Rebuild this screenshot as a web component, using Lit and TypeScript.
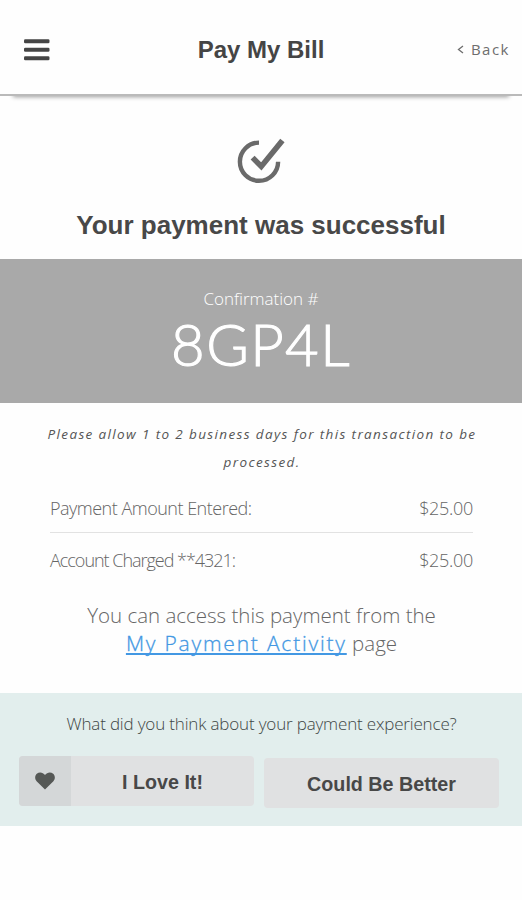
import { LitElement, html, css } from "lit";
import { customElement } from "lit/decorators.js";

const charges = [
  { label: "Payment Amount Entered:", amount: "$25.00", tight: false },
  { label: "Account Charged **4321:", amount: "$25.00", tight: true },
];

@customElement("app-root")
class AppRoot extends LitElement {
  static styles = css`
    :host {
      display: block;
      width: 522px;
      height: 900px;
      overflow: hidden;
      background: #fefefe;
      color: #656565;
      font-family: "Open Sans", "Noto Sans", sans-serif;
      font-weight: 300;
    }
    * { box-sizing: border-box; }
    svg { display: block; }
    .shell { isolation: isolate; }
    header {
      display: grid;
      grid-template-columns: 1fr auto 1fr;
      align-items: center;
      height: 96px;
      padding: 6px 12px 0 24px;
      border-bottom: 2px solid #bababa;
      background: #fefefe;
      position: relative;
    }
    header::after {
      content: "";
      position: absolute;
      z-index: -1;
      left: 14px;
      right: 14px;
      bottom: -1px;
      height: 6px;
      box-shadow: 0 1px 4px 1px rgba(0, 0, 0, 0.38);
    }
    .heading {
      margin: 0;
      padding-right: 12px;
      color: #454545;
      font: bold 24px/28px "Liberation Sans", Arial, sans-serif;
    }
    .back {
      justify-self: end;
      display: flex;
      align-items: center;
      gap: 7px;
      font-size: 15px;
      line-height: 20px;
      font-weight: 400;
      letter-spacing: 1.5px;
      padding-bottom: 2px;
      color: #6e6e6e;
    }
    .hero {
      height: 163px;
      padding-top: 41px;
      display: flex;
      flex-direction: column;
      align-items: center;
    }
    .success {
      margin: 25px 0 0;
      color: #484848;
      font: bold 26px/30px "Liberation Sans", Arial, sans-serif;
      white-space: nowrap;
    }
    .confirmation {
      height: 144px;
      padding-top: 28px;
      background: #a9a9a9;
      color: #fff;
      text-align: center;
    }
    .confirmation-label { font-size: 17px; line-height: 24px; }
    .code {
      margin-top: 3px;
      font: 300 58px/60px Lato, sans-serif;
      letter-spacing: 1.4px;
      -webkit-text-stroke: 1.1px #fff;
    }
    .note {
      margin: 0;
      padding: 18px 39px 0 41px;
      font-size: 13.5px;
      font-style: italic;
      font-weight: 400;
      line-height: 27.5px;
      letter-spacing: 1.37px;
      text-align: center;
      color: #555;
    }
    .charges { margin: 5px 49px 0 50px; }
    .charge {
      display: flex;
      justify-content: space-between;
      align-items: center;
      height: 52px;
      padding-top: 2px;
      border-bottom: 1px solid #e2e2e2;
      font-size: 18px;
      letter-spacing: -0.5px;
    }
    .charge:last-child { border-color: transparent; }
    .tight { letter-spacing: -1.02px; }
    .amount { letter-spacing: -0.3px; }
    .access {
      margin: 16px 0 0;
      padding-left: 1px;
      font-size: 20.5px;
      line-height: 28px;
      text-align: center;
    }
    .link {
      color: #4398e3;
      font-size: 21px;
      letter-spacing: 1.8px;
      -webkit-text-stroke: 0.3px #4398e3;
      text-decoration: underline;
      text-decoration-thickness: 1.5px;
      text-decoration-skip-ink: none;
      text-underline-offset: 2px;
    }
    .feedback {
      margin-top: 36px;
      height: 133px;
      padding: 19px 23px 0 19px;
      background: #e2eeed;
      color: #3e4645;
    }
    .question {
      padding-left: 5px;
      font-size: 17px;
      line-height: 24px;
      letter-spacing: -0.17px;
      text-align: center;
      white-space: nowrap;
    }
    .choices {
      display: grid;
      grid-template-columns: 235px 235px;
      gap: 10px;
      margin-top: 20px;
    }
    .choice {
      display: flex;
      height: 50px;
      border-radius: 4px;
      overflow: hidden;
      background: #e0e1e2;
      color: #484848;
      font: bold 19.7px/52px "Liberation Sans", Arial, sans-serif;
    }
    .choice.lower { margin: 2px 0 -2px; }
    .choice-text { flex: 1; text-align: center; }
    .heart {
      width: 52px;
      background: #d4d7d8;
      display: grid;
      place-items: center;
    }
  `;

  render() {
    return html`
      <div class="shell">
        <header>
          <svg width="26" height="22" viewBox="0 0 26 22" fill="#444">
            <rect x="0" y="0.2" width="25.5" height="4" rx="1.3" />
            <rect x="0" y="8.8" width="25.5" height="4" rx="1.3" />
            <rect x="0" y="17.3" width="25.5" height="4" rx="1.3" />
          </svg>
          <h1 class="heading">Pay My Bill</h1>
          <div class="back">
            <svg width="7" height="9" viewBox="0 0 7 9" fill="none" stroke="#6e6e6e" stroke-width="1.3">
              <path d="M6 1 L1.5 4.5 L6 8" />
            </svg>
            <span>Back</span>
          </div>
        </header>
        <section class="hero">
          <svg width="52" height="48" viewBox="0 0 52 48" fill="none" stroke="#6a6a6a">
            <path d="M24 5.6 A19.1 19.1 0 1 0 43.1 24.7" stroke-width="4.4" />
            <path d="M17.6 20.6 L26.3 29.4 L47.4 3.6" stroke-width="5.6" />
          </svg>
          <h2 class="success">Your payment was successful</h2>
        </section>
        <section class="confirmation">
          <div class="confirmation-label">Confirmation #</div>
          <div class="code">8GP4L</div>
        </section>
        <p class="note">Please allow 1 to 2 business days for this transaction to be processed.</p>
        <section class="charges">
          ${charges.map(
            (c) => html`<div class="charge">
              <span class=${c.tight ? "tight" : ""}>${c.label}</span>
              <span class="amount">${c.amount}</span>
            </div>`
          )}
        </section>
        <p class="access">
          You can access this payment from the<br />
          <a class="link">My Payment Activity</a> page
        </p>
        <section class="feedback">
          <div class="question">What did you think about your payment experience?</div>
          <div class="choices">
            <div class="choice">
              <span class="heart">
                <svg width="20" height="18" viewBox="0 0 20 18" fill="#555856">
                  <path d="M10 17.5 L1.6 9.2 C-0.4 7 -0.3 3.6 1.8 1.7 C4.2 -0.4 7.9 0 10 3 C12.1 0 15.8 -0.4 18.2 1.7 C20.3 3.6 20.4 7 18.4 9.2 Z" />
                </svg>
              </span>
              <span class="choice-text">I Love It!</span>
            </div>
            <div class="choice lower"><span class="choice-text">Could Be Better</span></div>
          </div>
        </section>
      </div>
    `;
  }
}
